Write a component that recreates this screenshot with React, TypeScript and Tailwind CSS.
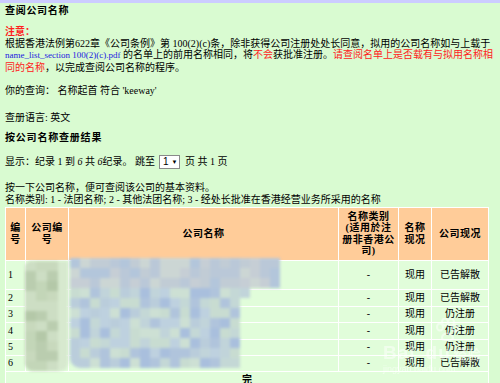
import React from "react";

const FONT = '"Liberation Serif", "Noto Sans CJK SC", serif';

function hash(a: number, b: number, s: number) {
  let h = (a * 374761393 + b * 668265263 + s * 2147483647) | 0;
  h = (h ^ (h >>> 13)) * 1274126177;
  h = h ^ (h >>> 16);
  return Math.abs(h);
}

const namePal = ["#b0c4dc", "#bacddb", "#c4d8d6", "#cde0d4", "#a9bfdd", "#bed1df", "#c8dcd1", "#c1d4da"];
const nameTopPal = ["#c6ced5", "#bac8d8", "#c1ccd5", "#b3c6db", "#ccd6d4"];
const numPal = ["#bacdaf", "#c3d6b8", "#cddec4", "#b4c8a8", "#c8d9bd"];

function NameMosaic() {
  const rowCols = [21, 21, 21, 18, 17, 17, 17, 17, 17, 17, 17];
  return (
    <div className="absolute left-[65px] top-[51px] flex flex-col blur-[1.5px] rounded-b-[10px] overflow-hidden">
      {rowCols.map((n, r) => (
        <div key={r} className="flex">
          {Array.from({ length: n }).map((_, c) => {
            const pal = r < 3 ? nameTopPal : namePal;
            const col = pal[hash(r, c, 3) % pal.length];
            return <div key={c} className="w-[10px] h-[10px]" style={{ backgroundColor: col }} />;
          })}
        </div>
      ))}
    </div>
  );
}

function NumMosaic() {
  return (
    <div className="absolute left-[20px] top-[54px] flex flex-col blur-[1.5px] rounded-b-[8px] rounded-tl-[6px] overflow-hidden">
      {Array.from({ length: 11 }).map((_, r) => (
        <div key={r} className="flex">
          {Array.from({ length: 3 }).map((_, c) => (
            <div key={c} className="w-[11px] h-[10px]" style={{ backgroundColor: numPal[hash(r, c, 7) % numPal.length] }} />
          ))}
          <div className="w-[10px] h-[10px] bg-[#d7e9cf]" />
        </div>
      ))}
    </div>
  );
}

const rows = [
  { n: "1", status: "已告解散", h: "h-[28px]" },
  { n: "2", status: "已告解散", h: "h-[16px]" },
  { n: "3", status: "仍注册", h: "h-[15px]" },
  { n: "4", status: "仍注册", h: "h-[16px]" },
  { n: "5", status: "仍注册", h: "h-[15px]" },
  { n: "6", status: "已告解散", h: "h-[15px]" },
];

export default function App() {
  return (
    <div className="relative w-[500px] h-[383px] overflow-hidden bg-[#d9fbd1] text-black text-[10px] leading-[11.5px]" style={{ fontFamily: FONT }}>
      <div className="h-[3px] bg-[#ccccff]" />
      <div className="pl-[5px]">
        <div className="mt-[2.25px] font-bold tracking-[0.7px] whitespace-nowrap">查阅公司名称</div>
        <div className="mt-[9.5px] font-bold text-[#ff2020] whitespace-nowrap">注意：</div>
        <div className="whitespace-nowrap">根据香港法例第622章《公司条例》第 100(2)(c)条，除非获得公司注册处处长同意，拟用的公司名称如与上载于</div>
        <div className="whitespace-nowrap">
          <span className="text-[#2020e0] text-[9px]">name_list_section 100(2)(c).pdf</span> 的名单上的前用名称相同，将<span className="text-[#ff2020]">不会</span>获批准注册。<span className="text-[#ff2020]">请查阅名单上是否载有与拟用名称相</span>
        </div>
        <div className="whitespace-nowrap">
          <span className="text-[#ff2020]">同的名称</span>，以完成查阅公司名称的程序。
        </div>
        <div className="mt-[12px] whitespace-nowrap">你的查询： 名称起首 符合 'keeway'</div>
        <div className="mt-[15.5px] whitespace-nowrap">查册语言: 英文</div>
        <div className="mt-[8.5px] font-bold tracking-[0.8px] whitespace-nowrap">按公司名称查册结果</div>
        <div className="mt-[11.25px] h-[14px] flex items-center whitespace-nowrap">
          <span>显示：纪录 1 到 <i>6</i> 共 <i>6</i>纪录。 跳至</span>
          <div className="ml-[4px] w-[21px] h-[14px] bg-white border border-[#8a8a8a] flex items-center pl-[3px] gap-[3px]" style={{ fontFamily: '"Liberation Sans", sans-serif' }}>
            <span className="text-[10px] leading-none">1</span>
            <span className="text-[6px] leading-none">▼</span>
          </div>
          <span className="ml-[5px]">页 共 1 页</span>
        </div>
        <div className="mt-[13.25px] whitespace-nowrap">按一下公司名称，便可查阅该公司的基本资料。</div>
        <div className="whitespace-nowrap">名称类别: 1 - 法团名称; 2 - 其他法团名称; 3 - 经处长批准在香港经营业务所采用的名称</div>
        <div className="relative mt-[1.25px] w-[484px]">
          <table className="table-fixed border-separate border-spacing-[1px] bg-white w-[484px]">
            <colgroup>
              <col className="w-[19px]" />
              <col className="w-[42px]" />
              <col className="w-[269px]" />
              <col className="w-[59px]" />
              <col className="w-[32px]" />
              <col className="w-[56px]" />
            </colgroup>
            <thead>
              <tr>
                {[["编", "号"], ["公司编", "号"], ["公司名称"], ["名称类别", "(适用於注", "册非香港公", "司)"], ["名称", "现况"], ["公司现况"]].map((lines, i) => (
                  <th key={i} className="h-[52px] p-0 bg-[#ffcc99] font-bold text-center align-middle tracking-[0.5px] whitespace-nowrap">
                    {lines.map((l, j) => (
                      <div key={j}>{l}</div>
                    ))}
                  </th>
                ))}
              </tr>
            </thead>
            <tbody>
              {rows.map((r) => (
                <tr key={r.n}>
                  <td className={`${r.h} p-0 pl-[2px] bg-[#e1fdda] align-middle`}>{r.n}</td>
                  <td className={`${r.h} p-0 bg-[#e1fdda]`}></td>
                  <td className={`${r.h} p-0 bg-[#e1fdda]`}></td>
                  <td className={`${r.h} p-0 bg-[#e1fdda] text-center align-middle`}>-</td>
                  <td className={`${r.h} p-0 bg-[#e1fdda] text-center align-middle`}>现用</td>
                  <td className={`${r.h} p-0 bg-[#e1fdda] text-center align-middle`}>{r.status}</td>
                </tr>
              ))}
              <tr>
                <td colSpan={6} className="h-[16px] p-0 bg-[#e1fdda] text-center font-bold align-middle">完</td>
              </tr>
            </tbody>
          </table>
          <NumMosaic />
          <NameMosaic />
        </div>
      </div>
      <div className="absolute left-[383px] top-[318px] text-white opacity-50 pointer-events-none" style={{ fontFamily: '"Liberation Sans", sans-serif' }}>
        <div className="flex justify-center ml-[30px] mb-[1px]">
          <svg width="26" height="24" viewBox="0 0 26 24" fill="none" stroke="white" strokeWidth="2">
            <ellipse cx="6" cy="9" rx="3" ry="3.5" />
            <ellipse cx="11" cy="4" rx="3" ry="3.5" />
            <ellipse cx="17" cy="4" rx="3" ry="3.5" />
            <ellipse cx="21" cy="10" rx="3" ry="3.5" />
            <path d="M8 20 C8 14 18 14 19 20 C19 23 8 23 8 20 Z" />
          </svg>
        </div>
        <div className="text-[19px] font-bold leading-[20px] whitespace-nowrap tracking-[1px]">Bai<span className="ml-[10px]">du</span><span className="text-[13px] ml-[3px]" style={{ fontFamily: '"Noto Sans CJK SC", sans-serif' }}>经验</span></div>
        <div className="text-[9px] leading-[10px] whitespace-nowrap">jingyan.baidu.com</div>
      </div>
    </div>
  );
}
